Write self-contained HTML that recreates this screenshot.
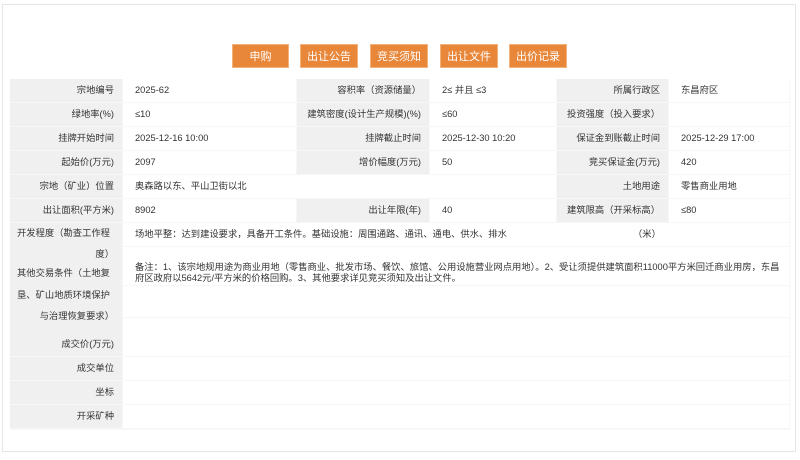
<!DOCTYPE html>
<html><head><meta charset="utf-8"><style>
body{margin:0;width:800px;height:460px;background:#fff;position:relative;overflow:hidden;font-family:"Liberation Sans","Noto Sans CJK SC",sans-serif;font-size:9.3px;color:#333}
.box{position:absolute;left:2px;top:4px;width:792px;height:446px;border:1px solid #e6e6e6}
.b{position:absolute;top:44px;height:24px;background:#e8873a;color:#fff;font-size:11px;line-height:24px;text-align:center;border:1px solid #f3b27a;box-sizing:border-box}
.c{position:absolute;box-sizing:border-box;line-height:22px;white-space:nowrap}
.l{background:#f0f0f0;text-align:right;padding-right:8px}
.v{background:#fff;padding-left:12px}
.ln{position:absolute;left:10px;width:112px;box-sizing:border-box;padding:0 8px 0 7px;white-space:nowrap;line-height:14px}
</style></head><body>
<div class="box"></div>
<div class="b" style="left:232px;width:57px">申购</div>
<div class="b" style="left:300px;width:58px">出让公告</div>
<div class="b" style="left:370px;width:58px">竞买须知</div>
<div class="b" style="left:440px;width:58px">出让文件</div>
<div class="b" style="left:509px;width:58px">出价记录</div>
<div style="position:absolute;left:10px;top:79px;width:780px;height:351px;background:#f7f7f7"></div>
<div id="t"></div>
<script>
var cols=[[10,112],[123,173],[297,132],[430,126],[557,111],[669,120]];
var rows=[
["宗地编号","2025-62","容积率（资源储量）","2≤ 并且 ≤3","所属行政区","东昌府区"],
["绿地率(%)","≤10","建筑密度(设计生产规模)(%)","≤60","投资强度（投入要求）",""],
["挂牌开始时间","2025-12-16 10:00","挂牌截止时间","2025-12-30 10:20","保证金到账截止时间","2025-12-29 17:00"],
["起始价(万元)","2097","增价幅度(万元)","50","竞买保证金(万元)","420"],
["宗地（矿业）位置","奥森路以东、平山卫街以北",null,null,"土地用途","零售商业用地"],
["出让面积(平方米)","8902","出让年限(年)","40","建筑限高（开采标高）","≤80"]];
var h="";
rows.forEach(function(r,i){var y=79+i*24;
 if(r[2]===null){
  h+='<div class="c l" style="left:10px;top:'+y+'px;width:112px;height:23px">'+r[0]+'</div>';
  h+='<div class="c v" style="left:123px;top:'+y+'px;width:433px;height:23px">'+r[1]+'</div>';
  h+='<div class="c l" style="left:557px;top:'+y+'px;width:111px;height:23px">'+r[4]+'</div>';
  h+='<div class="c v" style="left:669px;top:'+y+'px;width:120px;height:23px">'+r[5]+'</div>';
 } else r.forEach(function(t,j){
  h+='<div class="c '+(j%2?'v':'l')+'" style="left:'+cols[j][0]+'px;top:'+y+'px;width:'+cols[j][1]+'px;height:23px">'+t+'</div>';});
});
document.getElementById('t').innerHTML=h;
</script>
<div class="c l" style="left:10px;top:223px;width:112px;height:110px"></div>
<div class="ln" style="top:226px;text-align:left">开发程度（勘查工作程</div>
<div class="ln" style="top:247px;text-align:right">度）</div>
<div class="ln" style="top:266px;text-align:left">其他交易条件（土地复</div>
<div class="ln" style="top:288px;text-align:left">垦、矿山地质环境保护</div>
<div class="ln" style="top:309px;text-align:right">与治理恢复要求）</div>
<div class="c v" style="left:123px;top:223px;width:666px;height:23px;line-height:22px">场地平整：达到建设要求，具备开工条件。基础设施：周围通路、通讯、通电、供水、排水<span style="position:absolute;left:510px">（米）</span></div>
<div class="c v" style="left:123px;top:247px;width:666px;height:38px;white-space:normal;line-height:11px;padding:15px 4px 0 12px">备注：1、该宗地规用途为商业用地（零售商业、批发市场、餐饮、旅馆、公用设施营业网点用地）。2、受让须提供建筑面积11000平方米回迁商业用房，东昌府区政府以5642元/平方米的价格回购。3、其他要求详见竞买须知及出让文件。</div>
<div class="c v" style="left:123px;top:286px;width:666px;height:31px"></div>
<div class="c v" style="left:123px;top:318px;width:666px;height:15px"></div>
<div class="c l" style="left:10px;top:333px;width:112px;height:23px">成交价(万元)</div><div class="c v" style="left:123px;top:333px;width:666px;height:23px"></div>
<div class="c l" style="left:10px;top:357px;width:112px;height:23px">成交单位</div><div class="c v" style="left:123px;top:357px;width:666px;height:23px"></div>
<div class="c l" style="left:10px;top:381px;width:112px;height:23px">坐标</div><div class="c v" style="left:123px;top:381px;width:666px;height:23px"></div>
<div class="c l" style="left:10px;top:405px;width:112px;height:23px">开采矿种</div><div class="c v" style="left:123px;top:405px;width:666px;height:23px"></div>
</body></html>
